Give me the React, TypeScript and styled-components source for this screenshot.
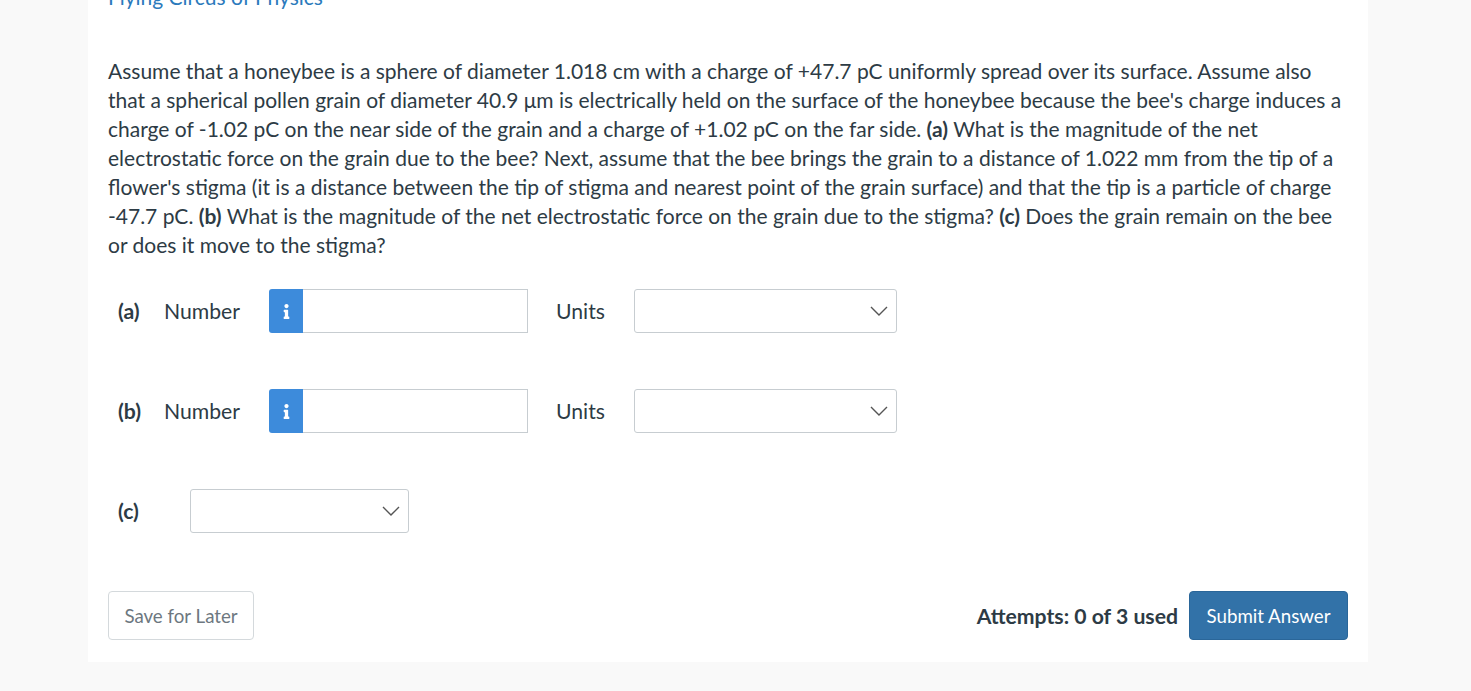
import React from "react";
import styled, { createGlobalStyle } from "styled-components";

const Global = createGlobalStyle`
  html, body { margin: 0; padding: 0; background: #f9f9f9; }
  body { font-family: Lato, "Liberation Sans", sans-serif; color: #2d3b45; overflow: hidden; }
  * { box-sizing: border-box; }
`;

const Page = styled.div`
  height: 691px;
  padding-left: 88px;
`;

const Card = styled.div`
  width: 1280px;
  height: 662px;
  background: #fff;
  padding: 0 20px 22px 20px;
  display: flex;
  flex-direction: column;
`;

const Title = styled.a`
  display: block;
  margin-top: -17px;
  font-size: 21px;
  line-height: 28px;
  color: #2b7abc;
  text-decoration: none;
`;

const Question = styled.p`
  margin: 45px 0 0 0;
  font-size: 21px;
  line-height: 29px;
  width: 1240px;
`;

const Rows = styled.div`
  margin-top: 30px;
  display: flex;
  flex-direction: column;
  gap: 56px;
  padding-left: 10px;
`;

const Row = styled.div`
  display: flex;
  align-items: center;
  height: 44px;
  font-size: 21.2px;
`;

const PartLabel = styled.span<{ $w: number }>`
  font-weight: 700;
  width: ${(p) => p.$w}px;
`;

const FieldLabel = styled.span<{ $w: number }>`
  width: ${(p) => p.$w}px;
`;

const InputGroup = styled.div`
  display: flex;
  height: 44px;
  margin-right: 28px;
`;

const InfoButton = styled.div`
  width: 34px;
  height: 44px;
  background: #3d8bdb;
  border-radius: 3px 0 0 3px;
  display: flex;
  align-items: center;
  justify-content: center;
`;

const TextInput = styled.div`
  width: 225px;
  height: 44px;
  border: 1px solid #c7cdd1;
  border-left: none;
  background: #fff;
`;

const Select = styled.div<{ $w: number }>`
  width: ${(p) => p.$w}px;
  height: 44px;
  border: 1px solid #c7cdd1;
  border-radius: 3px;
  background: #fff;
  display: flex;
  align-items: center;
  justify-content: flex-end;
  padding-right: 8px;
`;

const Footer = styled.div`
  margin-top: auto;
  display: flex;
  align-items: center;
  justify-content: space-between;
`;

const SaveButton = styled.button`
  height: 49px;
  width: 146px;
  border: 1px solid #d4d9dc;
  border-radius: 4px;
  background: #fff;
  color: #6d7780;
  font-family: Lato, "Liberation Sans", sans-serif;
  font-size: 18.7px;
  padding: 0;
`;

const Right = styled.div`
  display: flex;
  align-items: center;
  gap: 11px;
`;

const Attempts = styled.span`
  font-weight: 700;
  font-size: 21.2px;
`;

const SubmitButton = styled.button`
  height: 49px;
  width: 159px;
  border: 1px solid #2a6699;
  border-radius: 4px;
  background: #3272a8;
  color: #fff;
  font-family: Lato, "Liberation Sans", sans-serif;
  font-size: 18.7px;
  padding: 0;
`;

const InfoIcon = () => (
  <svg width="7" height="15" viewBox="0 0 192 512" fill="#fff">
    <path d="M20 424.229h20V279.771H20c-11.046 0-20-8.954-20-20V212c0-11.046 8.954-20 20-20h112c11.046 0 20 8.954 20 20v212.229h20c11.046 0 20 8.954 20 20V492c0 11.046-8.954 20-20 20H20c-11.046 0-20-8.954-20-20v-47.771c0-11.046 8.954-20 20-20zM96 0C56.235 0 24 32.235 24 72s32.235 72 72 72 72-32.235 72-72S135.764 0 96 0z" />
  </svg>
);

const Chevron = () => (
  <svg width="18" height="10" viewBox="0 0 18 10" fill="none">
    <path d="M1 1l8 8 8-8" stroke="#555" strokeWidth="1.4" />
  </svg>
);

const NumberRow = ({ part }: { part: string }) => (
  <Row>
    <PartLabel $w={46}>{part}</PartLabel>
    <FieldLabel $w={105}>Number</FieldLabel>
    <InputGroup>
      <InfoButton>
        <InfoIcon />
      </InfoButton>
      <TextInput />
    </InputGroup>
    <FieldLabel $w={78}>Units</FieldLabel>
    <Select $w={263}>
      <Chevron />
    </Select>
  </Row>
);

export default function App() {
  return (
    <>
      <Global />
      <Page>
        <Card>
          <Title>Flying Circus of Physics</Title>
          <Question>
            Assume that a honeybee is a sphere of diameter 1.018 cm with a charge of +47.7 pC uniformly spread over its
            surface. Assume also that a spherical pollen grain of diameter 40.9 μm is electrically held on the surface of
            the honeybee because the bee's charge induces a charge of -1.02 pC on the near side of the grain and a charge
            of +1.02 pC on the far side. <b>(a)</b> What is the magnitude of the net electrostatic force on the grain due to
            the bee? Next, assume that the bee brings the grain to a distance of 1.022 mm from the tip of a flower's stigma
            (it is a distance between the tip of stigma and nearest point of the grain surface) and that the tip is a
            particle of charge -47.7 pC. <b>(b)</b> What is the magnitude of the net electrostatic force on the grain due to
            the stigma? <b>(c)</b> Does the grain remain on the bee or does it move to the stigma?
          </Question>
          <Rows>
            <NumberRow part="(a)" />
            <NumberRow part="(b)" />
            <Row>
              <PartLabel $w={72}>(c)</PartLabel>
              <Select $w={219}>
                <Chevron />
              </Select>
            </Row>
          </Rows>
          <Footer>
            <SaveButton>Save for Later</SaveButton>
            <Right>
              <Attempts>Attempts: 0 of 3 used</Attempts>
              <SubmitButton>Submit Answer</SubmitButton>
            </Right>
          </Footer>
        </Card>
      </Page>
    </>
  );
}
